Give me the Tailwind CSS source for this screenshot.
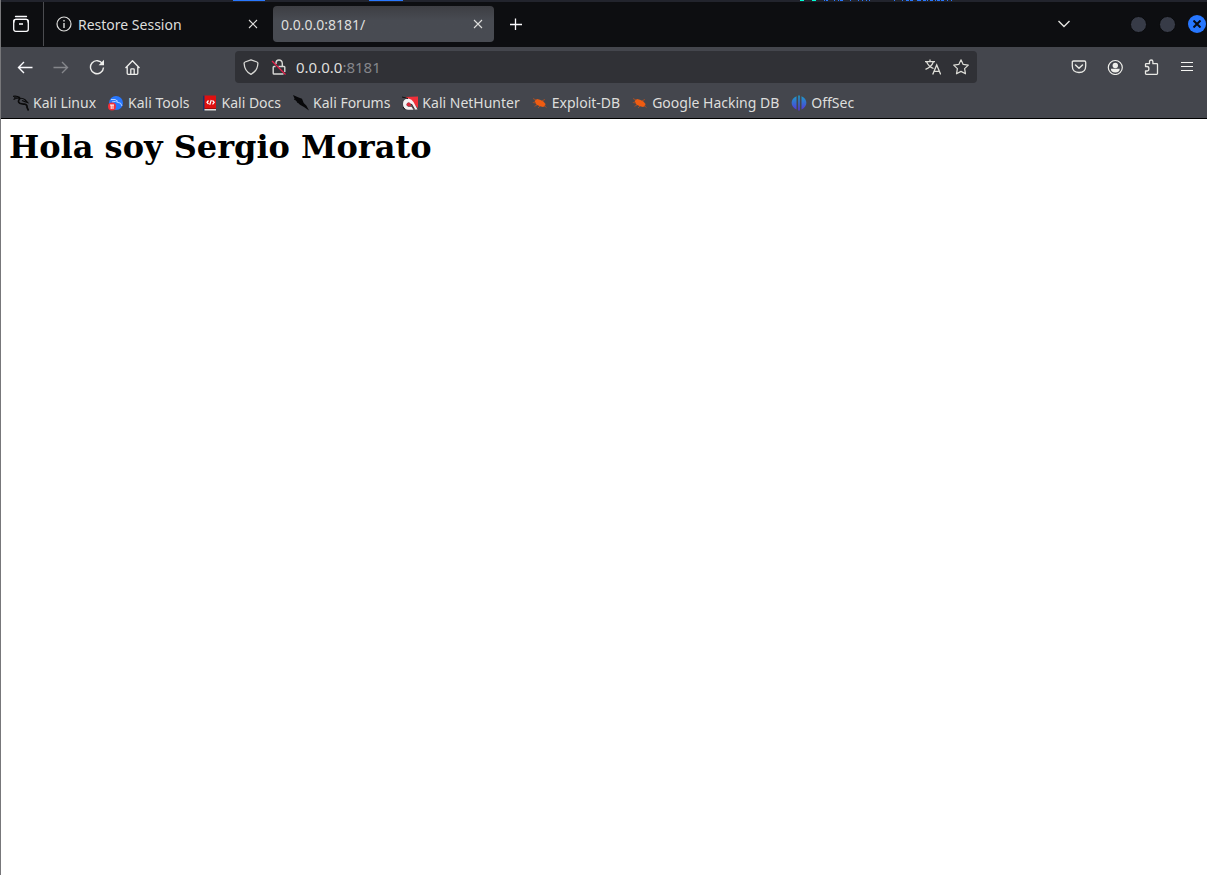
<!DOCTYPE html>
<html lang="en">
<head>
<meta charset="utf-8">
<title>0.0.0.0:8181/</title>
<script src="https://cdn.jsdelivr.net/npm/@tailwindcss/browser@4"></script>
</head>
<body class="min-h-screen flex flex-col bg-white border-l border-[#77777a] font-['Noto_Sans',sans-serif] text-sm text-[#dededc]">
<svg class="hidden">
  <symbol id="close" viewBox="0 0 10 10"><path d="M1 1l8 8M9 1l-8 8" stroke="currentColor" stroke-width="1.1" fill="none"/></symbol>
  <symbol id="dragon" viewBox="0 0 16 16"><path d="M0 1.300Q4 .6 7 2.600M.5 4.500Q4 2.300 7.500 3.500M1 2.800l6 .4M7 3.300Q10 3 12 4.800L14.500 7.500L12 6.800L9 5.500" stroke="currentColor" stroke-width="1.200" fill="none"/><path d="M7 3.500Q4 6.500 6.800 8.300Q8.500 9.200 11.500 9Q14.500 9.800 14 12.300L15.600 15.500" stroke="currentColor" stroke-width="1.700" fill="none"/></symbol>
  <symbol id="bug" viewBox="0 0 16 16"><path d="M2.500 6L5 4L8 4.800L11.500 6.500L13.500 9L13 11L11 12L8 11.300L4.500 9.800Z" fill="#ef5c12"/><path d="M4 5L1 3.500M4 8L.8 7.500M5 10L2.500 11.300M8 11L6 13M10 5.800L13 4.500M12 10.500L14.500 12.500" stroke="#b7501f" stroke-width=".8" fill="none"/></symbol>
</svg>
<header>
  <div class="h-[2px] flex overflow-hidden bg-[#22242d]" aria-hidden="true">
    <svg class="w-full h-[2px]"><path d="M232 .5h32M368 .5h34M823 .5h1M825 .5h2M833 .5h1M837 .5h1M839 .5h3M849 .5h1M857 .5h1M861 .5h1M865 .5h1M868 .5h1M893 .5h1M901 .5h1M905 .5h3M909 .5h3M916 .5h4M922 .5h3M926 .5h1M929 .5h3M934 .5h1M936 .5h3M940 .5h3M946 .5h1M950 .5h1" stroke="#2878ff"/><path d="M799 .5h4M811 .5h4" stroke="#00ffd5"/></svg>
  </div>
  <div class="h-[45px] pb-px flex items-center bg-[#0d0e11]">
    <button aria-label="Recent browsing" class="w-[43px] h-11 border-r border-[#4b4c50] flex items-center justify-center pr-0.5">
      <svg class="size-5" viewBox="0 0 20 20" fill="none" stroke="#fbfbfe" stroke-width="1.300"><path d="M4.500 2.500h11" stroke-linecap="round"/><rect x="2.700" y="5.300" width="14.600" height="12" rx="2"/><path d="M3 8.500V7.300q0-2 2-2h10q2 0 2 2v1.200M8 10h4"/></svg>
    </button>
    <div class="w-[229px] flex items-center pl-3 pr-[21px]">
      <svg class="size-4 mr-1.5" viewBox="0 0 16 16" fill="none" stroke="currentColor" stroke-width="1.200"><circle cx="8" cy="8" r="7"/><path d="M8 7v5M8 4v1.500" stroke-width="1.400"/></svg>
      <button class="flex-1 text-left pt-0.5">Restore Session</button>
      <button aria-label="Close tab"><svg class="size-[10px] -mr-1.5"><use href="#close"/></svg></button>
    </div>
    <div class="w-[221px] h-9 rounded bg-linear-to-b from-[#3d3e43] to-[#484b52] to-40% flex items-center pl-2 pr-[11px]">
      <button class="flex-1 text-left pt-0.5">0.0.0.0:8181/</button>
      <button aria-label="Close tab"><svg class="size-[10px]"><use href="#close"/></svg></button>
    </div>
    <button aria-label="New tab" class="w-11 h-9 flex items-center justify-center"><svg class="size-3" viewBox="0 0 12 12" stroke="#fbfbfe" stroke-width="1.300"><path d="M0 6.500h12M5.500 .5v12"/></svg></button>
    <div class="flex-1"></div>
    <button aria-label="List all tabs" class="mr-[59px]"><svg class="w-[14px] h-2" viewBox="0 0 14 8" fill="none" stroke="#e4e4e0" stroke-width="1.400"><path d="M1.500 1L7 6.500L12.500 1"/></svg></button>
    <div class="flex items-center gap-3">
      <button aria-label="Minimize" class="size-[17px] rounded-full bg-[#373b47] border border-[#08090b]"></button>
      <button aria-label="Maximize" class="size-[17px] rounded-full bg-[#373b47] border border-[#08090b]"></button>
      <button aria-label="Close window" class="size-[18px] mr-px rounded-full bg-[#2777ff] flex items-center justify-center"><svg class="size-2" viewBox="0 0 8 8" stroke="#080b14" stroke-width="2"><path d="M.5.5l7 7M7.500.5L.5 7.500"/></svg></button>
    </div>
  </div>
  <div class="bg-[#44464d] border-b border-black">
    <div class="h-10 flex items-center">
      <div class="flex items-center gap-5 pl-4">
        <button aria-label="Back"><svg class="size-4" viewBox="0 0 16 16" fill="none" stroke="#fbfbfe" stroke-width="1.400"><path d="M15.500 8.500H1.500M7 3L1.500 8.500L7 14"/></svg></button>
        <button aria-label="Forward" disabled><svg class="size-4" viewBox="0 0 16 16" fill="none" stroke="#85868b" stroke-width="1.400"><path d="M.5 8.500h14M9 3L14.500 8.500L9 14"/></svg></button>
        <button aria-label="Reload"><svg class="size-4" viewBox="0 0 16 16" fill="none" stroke="#eeeeec" stroke-width="1.400"><path d="M13.500 4.700A6.500 6.500 0 1 0 14.500 8.500"/><path d="M15 .8v5.400H9.600z" fill="#eeeeec" stroke="none"/></svg></button>
        <button aria-label="Home"><svg class="size-4" viewBox="0 0 16 16" fill="none" stroke="#eeeeec" stroke-width="1.300" stroke-linejoin="round"><path d="M.5 9L7.500 1.700l7 7.300M2.200 7.500v6.800q0 1 1 1h8.600q1 0 1-1V7.500M5.800 15V10.500q0-.7.7-.7h2q.7 0 .7.700v4.500"/></svg></button>
      </div>
      <div class="flex-[94]"></div>
      <div class="flex-[726] h-8 rounded bg-[#303136] flex items-center pl-2 pr-2">
        <button aria-label="Tracking protection" class="mr-3"><svg class="size-4" viewBox="0 0 16 16" fill="none" stroke="#d8d8d5" stroke-width="1.300" stroke-linejoin="round"><path d="M8 .8L14 3q.9.300.9 1.200Q14.600 12 8 15.300Q1.400 12 1.100 4.200Q1.100 3.300 2 3Z"/></svg></button>
        <button aria-label="Connection not secure" class="mr-[9px]"><svg class="size-4" viewBox="0 0 16 16" fill="none" stroke="#d8d8d5" stroke-width="1.400"><path d="M5 5V4.500Q5 1 8 1t3.300 3.500V7M7.500 7.500H13q.8 0 .8.800V13M12.500 15H3q-.8 0-.8-.8V8.300q0-.8.800-.8h1.500"/><path d="M1 2L14.500 15.500" stroke="#e5204b" stroke-width="1.300"/></svg></button>
        <div class="relative flex-1 h-5 text-[15px] leading-5">
          <input aria-label="Address" value="0.0.0.0:8181" class="block w-full h-5 bg-transparent text-transparent caret-white outline-none">
          <div class="absolute inset-0 pointer-events-none" aria-hidden="true">0.0.0.0<span class="text-[#85868b]">:8181</span></div>
        </div>
        <button aria-label="Translate page" class="mr-3"><svg class="size-4" viewBox="0 0 16 16" fill="none" stroke="#deded8" stroke-width="1.300"><path d="M0 2.600h10M5 .5v2M1.700 3Q3.500 7.500 8.500 9.500M8.300 3Q6.500 8 .5 10.300M7.700 15.500L11.700 6l4 9.500M9 12.300h5.400"/></svg></button>
        <button aria-label="Bookmark this page"><svg class="size-4" viewBox="0 0 16 16" fill="none" stroke="#deded8" stroke-width="1.200" stroke-linejoin="round"><path d="M8 .8l2.200 4.600 5.100.7-3.700 3.500.9 5.200L8 12.400l-4.500 2.400.9-5.200L.7 6.100l5.100-.7z"/></svg></button>
      </div>
      <div class="flex-[94]"></div>
      <div class="flex items-center gap-5 pr-3">
        <button aria-label="Save to Pocket"><svg class="size-4" viewBox="0 0 16 16" fill="none" stroke="#e8e8e4" stroke-width="1.300" stroke-linejoin="round"><path d="M2.500 2h11q1.200 0 1.200 1.200V7q0 6.500-6.700 6.500T1.300 7V3.200Q1.300 2 2.500 2z"/><path d="M4.500 6L8 9.200L11.500 6" stroke-linecap="round" stroke-width="1.500"/></svg></button>
        <button aria-label="Account"><svg class="size-4" viewBox="0 0 16 16" fill="#eeeeea"><circle cx="8.300" cy="8.500" r="7" fill="none" stroke="#eeeeea" stroke-width="1.200"/><circle cx="8.300" cy="6.500" r="2.700"/><path d="M3.900 9.700h8.800q0 3.800-4.400 3.800T3.900 9.700z"/></svg></button>
        <button aria-label="Extensions"><svg class="size-4" viewBox="0 0 16 16" fill="none" stroke="#e8e8e4" stroke-width="1.300" stroke-linejoin="round"><path d="M2.500 7.500V5.500q0-.8.800-.8h3.200V2.800Q6.500 1 8.200 1t1.700 1.800v1.900h3.800q.8 0 .8.800v9q0 .8-.8.800H3.300q-.8 0-.8-.8v-2.500h1.700q1.700 0 1.700-2.200t-1.700-2.300z"/></svg></button>
        <button aria-label="Application menu"><svg class="size-4" viewBox="0 0 16 16" stroke="#f4f4f2" stroke-width="1.200"><path d="M2 3.500h12M2 7.500h12M2 11.500h12"/></svg></button>
      </div>
    </div>
    <nav aria-label="Bookmarks" class="h-[31px] flex items-center gap-3 pl-3 whitespace-nowrap">
      <a href="#" class="flex items-center gap-1"><svg class="size-4 text-[#0a0a0b]"><use href="#dragon"/></svg>Kali Linux</a>
      <a href="#" class="flex items-center gap-1"><svg class="size-4" viewBox="0 0 16 16"><circle cx="8" cy="8" r="7" fill="#2777ff"/><path d="M3 4.500q5-1 7 2M4 7q4-1.500 6 .5 3-.5 4 3.500" stroke="#b5d2ff" stroke-width="1" fill="none"/><circle cx="4" cy="11.500" r="4" fill="#f22f38"/><path d="M2 10h4M3.200 10v4M5 10v4" stroke="#fff" fill="none"/></svg>Kali Tools</a>
      <a href="#" class="flex items-center gap-1"><svg class="size-4" viewBox="0 0 16 16"><path d="M1 .5h13v13H1z" fill="#e01010"/><path d="M1 .5h1.500v15H1z" fill="#173569"/><path d="M2.500 14h11.500v1.500H2.500z" fill="#ddd"/><path d="M2.500 13H14v1H2.500z" fill="#a00c0c"/><path d="M6.500 5.500L5 7.300L6.500 9M10.500 5.500L12.200 7.300L10.500 9.300M9.300 5L7.700 9.800" stroke="#fff" stroke-width="1.200" fill="none"/></svg>Kali Docs</a>
      <a href="#" class="flex items-center gap-1"><svg class="size-4" viewBox="0 0 16 16"><path d="M0 0L5 2.300L9 3.700L10.700 8L13.300 10.500L16 15.500L11 12L7 9.700L4 7L1.500 3.500Z" fill="#08080a"/><path d="M1 4l4 2M4 7l3 .5" stroke="#08080a"/></svg>Kali Forums</a>
      <a href="#" class="flex items-center gap-1"><svg class="size-4" viewBox="0 0 16 16"><path d="M3 2L16 1.500V13L6 4z" fill="#f0303a"/><path d="M1 9Q1 3.500 6.500 3.500Q10 4 11.500 7L15.500 14.500H12L8.500 8.500Q6.500 6.500 4.700 8.700Q4 11 6.500 11.700H9.500L11.500 14.800H6Q1 14 1 9Z" fill="#f5f1f3"/><path d="M9.300 9L12.500 14.500" stroke="#33272c" stroke-width="1.200"/><path d="M4.500 9.500Q6 6.300 8.500 8.500L9 11.300H6.500Q4.700 11 4.500 9.500Z" fill="#d8293a"/><path d="M0 2l6 1.500M1 12l2 2.500" stroke="#111"/></svg>Kali NetHunter</a>
      <a href="#" class="flex items-center gap-1"><svg class="size-4"><use href="#bug"/></svg>Exploit-DB</a>
      <a href="#" class="flex items-center gap-1"><svg class="size-4"><use href="#bug"/></svg>Google Hacking DB</a>
      <a href="#" class="flex items-center gap-1"><svg class="size-4" viewBox="0 0 16 16"><defs><linearGradient id="os" x1="0" y1="0" x2="0" y2="1"><stop offset="0" stop-color="#1b9fc9"/><stop offset="1" stop-color="#5535d8"/></linearGradient></defs><path d="M5.500 1.200V14.500C-1 11.500-1 4 5.500 1.200zM7.200 .5h1.600v15H7.200zM10.500 1.200V14.500C17 11.500 17 4 10.500 1.200z" fill="url(#os)"/></svg>OffSec</a>
    </nav>
  </div>
</header>
<main class="flex-1 p-2 text-black">
  <h1 class="font-['DejaVu_Serif',serif] font-bold text-[32px] leading-10">Hola soy Sergio Morato</h1>
</main>
</body>
</html>
